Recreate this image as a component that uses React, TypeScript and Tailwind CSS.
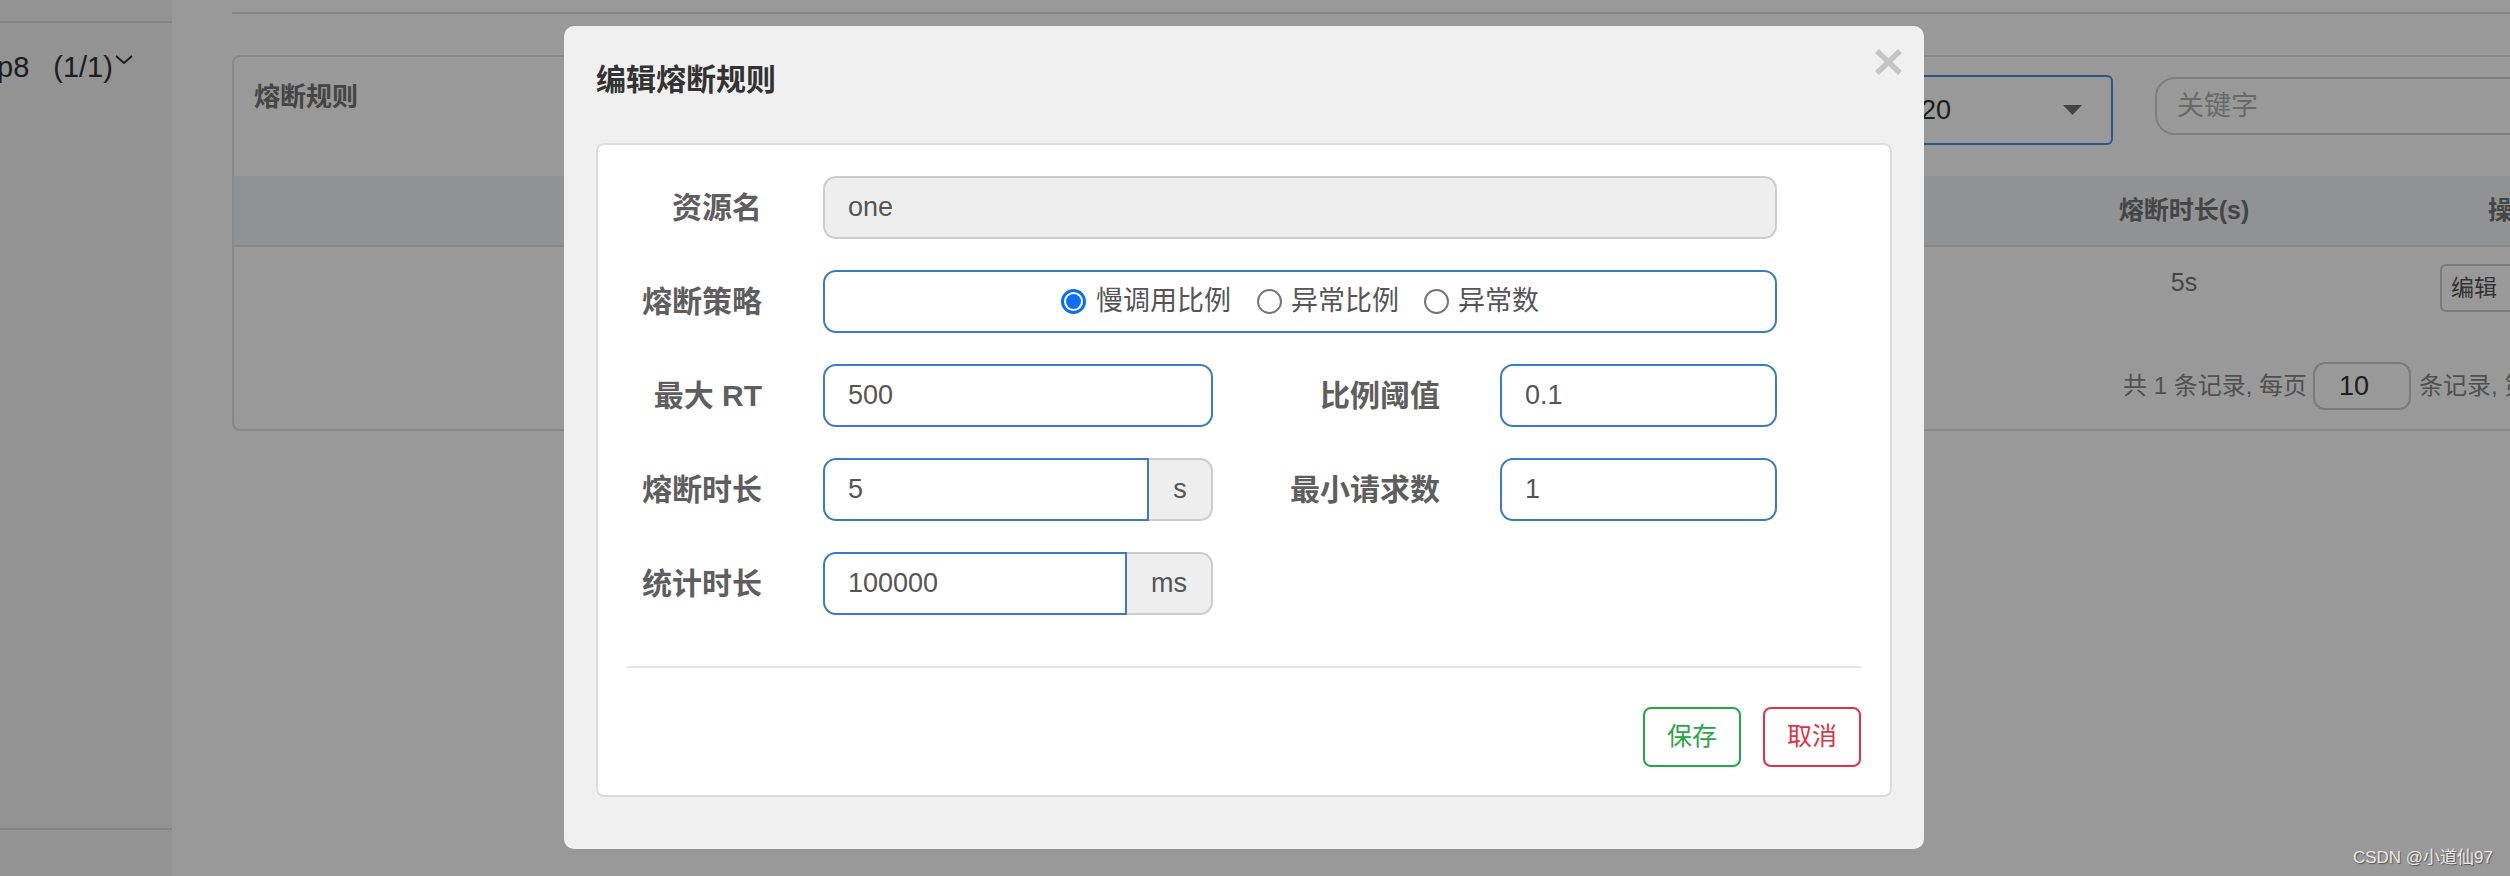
import React from "react";

function Radio({ checked }: { checked?: boolean }) {
  if (checked) {
    return (
      <span className="flex h-[25px] w-[25px] shrink-0 items-center justify-center rounded-full border-[3px] border-[#0b6ef7] bg-white">
        <span className="h-[15px] w-[15px] rounded-full bg-[#0b6ef7]" />
      </span>
    );
  }
  return <span className="h-[25px] w-[25px] shrink-0 rounded-full border-2 border-[#767676] bg-white" />;
}

export default function App() {
  return (
    <div className="relative h-[876px] w-[2510px] overflow-hidden bg-white font-['Liberation_Sans','Noto_Sans_CJK_SC',sans-serif] text-[#333]">
      {/* page under the backdrop */}
      <div className="flex h-full">
        <aside className="flex h-full w-[172px] shrink-0 flex-col bg-[#f5f5f5]">
          <div className="h-[23px] border-b-2 border-[#dddddd]" />
          <div className="mt-[26px] flex items-start whitespace-nowrap text-[29px] leading-[36px] text-[#333]">
            <span className="-ml-[3px]">p8</span>
            <span className="ml-[24px]">(1/1)</span>
            <svg width="18" height="10" viewBox="0 0 18 10" className="ml-[2px] mt-[6px]">
              <polyline points="1,1 9,8 17,1" fill="none" stroke="#333" strokeWidth="2" />
            </svg>
          </div>
          <div className="mb-[46px] mt-auto border-b-2 border-[#dddddd]" />
        </aside>

        <main className="min-w-0 flex-1 pl-[60px]">
          <div className="h-[14px] border-b-2 border-[#dddddd]" />
          <section className="mt-[41px] flex h-[376px] w-[2330px] flex-col rounded-[8px] border-2 border-[#e3e3e3]">
            <div className="flex h-[119px] items-start px-[20px] pt-[18px]">
              <h3 className="mt-[2px] flex-1 text-[26px] font-bold leading-[40px] text-[#737373]">熔断规则</h3>
              <div className="flex h-[70px] w-[260px] items-center justify-between rounded-[6px] border-2 border-[#4a90e2] pl-[66px] pr-[29px] text-[27px] text-[#333]">
                <span>20</span>
                <svg width="19" height="10" viewBox="0 0 19 10">
                  <polygon points="0,0 19,0 9.5,10" fill="#707070" />
                </svg>
              </div>
              <div className="ml-[42px] mt-[2px] flex h-[58px] w-[385px] items-center rounded-[20px] border-2 border-[#d0d0d0] pl-[20px] text-[27px] text-[#b0b0b0]">
                关键字
              </div>
            </div>

            <div className="grid h-[71px] grid-cols-[1fr_260px_246px] items-center border-b-2 border-[#e3e3e3] bg-[#f2f3f5] text-[25px] font-bold text-[#737373]">
              <div />
              <div className="text-center">熔断时长(s)</div>
              <div className="whitespace-nowrap pl-[174px]">操作</div>
            </div>

            <div className="grid h-[65px] grid-cols-[1fr_260px_246px] items-start pt-[17px] text-[25px] leading-[36px] text-[#737373]">
              <div />
              <div className="text-center">5s</div>
              <div className="pl-[126px]">
                <div className="flex h-[48px] w-[100px] items-center whitespace-nowrap rounded-[6px] border-2 border-[#cccccc] bg-white px-[9px] text-[23px] text-[#555]">
                  编辑
                </div>
              </div>
            </div>

            <div className="mt-[50px] flex items-center whitespace-nowrap pl-[1889px] text-[24px] text-[#858585]">
              <span>共 1 条记录, 每页</span>
              <div className="ml-[6px] flex h-[48px] w-[98px] items-center rounded-[12px] border-2 border-[#cccccc] pl-[24px] text-[27px] text-[#333]">
                10
              </div>
              <span className="ml-[8px]">条记录, 第</span>
            </div>
          </section>
        </main>
      </div>

      {/* backdrop + modal */}
      <div className="absolute inset-0 bg-[rgba(0,0,0,0.4)]">
        <div className="absolute left-[564px] top-[26px] w-[1360px] rounded-[10px] bg-[#f0f0f0] px-[32px] pb-[52px] pt-[34px]">
          <h4 className="text-[30px] font-bold leading-[40px] text-[#333]">编辑熔断规则</h4>
          <button className="absolute right-[22px] top-[23px]">
            <svg width="27" height="26" viewBox="0 0 27 26">
              <line x1="2" y1="2" x2="25" y2="24" stroke="#c4c4c4" strokeWidth="5.5" />
              <line x1="25" y1="2" x2="2" y2="24" stroke="#c4c4c4" strokeWidth="5.5" />
            </svg>
          </button>

          <div className="mt-[43px] rounded-[8px] border-2 border-[#dddddd] bg-white px-[29px] pb-[28px] pt-[31px]">
            <div className="flex flex-col gap-[31px] text-[27px] text-[#555]">
              <div className="flex h-[63px] items-center">
                <label className="w-[135px] shrink-0 text-right text-[30px] font-bold text-[#5e5e5e]">资源名</label>
                <input
                  readOnly
                  value="one"
                  className="ml-[61px] h-[63px] w-[954px] rounded-[13px] border-2 border-[#cccccc] bg-[#eeeeee] px-[23px] text-[#555] outline-none"
                />
              </div>

              <div className="flex h-[63px] items-center">
                <label className="w-[135px] shrink-0 text-right text-[30px] font-bold text-[#5e5e5e]">熔断策略</label>
                <div className="ml-[61px] flex h-[63px] w-[954px] items-center justify-center rounded-[13px] border-2 border-[#3b7bbf]">
                  <Radio checked />
                  <span className="ml-[10px]">慢调用比例</span>
                  <span className="ml-[26px]" />
                  <Radio />
                  <span className="ml-[9px]">异常比例</span>
                  <span className="ml-[25px]" />
                  <Radio />
                  <span className="ml-[9px]">异常数</span>
                </div>
              </div>

              <div className="flex h-[63px] items-center">
                <label className="w-[135px] shrink-0 text-right text-[30px] font-bold text-[#5e5e5e]">最大 RT</label>
                <input
                  readOnly
                  value="500"
                  className="ml-[61px] h-[63px] w-[390px] rounded-[13px] border-2 border-[#3b7bbf] bg-white px-[23px] text-[#555] outline-none"
                />
                <label className="w-[227px] shrink-0 text-right text-[30px] font-bold text-[#5e5e5e]">比例阈值</label>
                <input
                  readOnly
                  value="0.1"
                  className="ml-[60px] h-[63px] w-[277px] rounded-[13px] border-2 border-[#3b7bbf] bg-white px-[23px] text-[#555] outline-none"
                />
              </div>

              <div className="flex h-[63px] items-center">
                <label className="w-[135px] shrink-0 text-right text-[30px] font-bold text-[#5e5e5e]">熔断时长</label>
                <div className="ml-[61px] flex h-[63px] w-[390px]">
                  <input
                    readOnly
                    value="5"
                    className="h-full w-[326px] rounded-l-[13px] border-2 border-[#3b7bbf] bg-white px-[23px] text-[#555] outline-none"
                  />
                  <span className="flex h-full w-[64px] items-center justify-center rounded-r-[13px] border-2 border-l-0 border-[#cccccc] bg-[#eeeeee]">
                    s
                  </span>
                </div>
                <label className="w-[227px] shrink-0 text-right text-[30px] font-bold text-[#5e5e5e]">最小请求数</label>
                <input
                  readOnly
                  value="1"
                  className="ml-[60px] h-[63px] w-[277px] rounded-[13px] border-2 border-[#3b7bbf] bg-white px-[23px] text-[#555] outline-none"
                />
              </div>

              <div className="flex h-[63px] items-center">
                <label className="w-[135px] shrink-0 text-right text-[30px] font-bold text-[#5e5e5e]">统计时长</label>
                <div className="ml-[61px] flex h-[63px] w-[390px]">
                  <input
                    readOnly
                    value="100000"
                    className="h-full w-[304px] rounded-l-[13px] border-2 border-[#3b7bbf] bg-white px-[23px] text-[#555] outline-none"
                  />
                  <span className="flex h-full w-[86px] items-center justify-center rounded-r-[13px] border-2 border-l-0 border-[#cccccc] bg-[#eeeeee]">
                    ms
                  </span>
                </div>
              </div>
            </div>

            <div className="mt-[51px] h-[2px] bg-[#e5e5e5]" />

            <div className="mt-[39px] flex justify-end gap-[22px] text-[25px]">
              <button className="h-[60px] w-[98px] rounded-[8px] border-2 border-[#28a745] bg-white text-[#28a745]">保存</button>
              <button className="h-[60px] w-[98px] rounded-[8px] border-2 border-[#dc3545] bg-white text-[#dc3545]">取消</button>
            </div>
          </div>
        </div>

        <div className="absolute bottom-[6px] right-[17px] text-[17px] text-[#e8e8e8] [text-shadow:1px_1px_1px_rgba(0,0,0,0.45)]">
          CSDN @小道仙97
        </div>
      </div>
    </div>
  );
}
